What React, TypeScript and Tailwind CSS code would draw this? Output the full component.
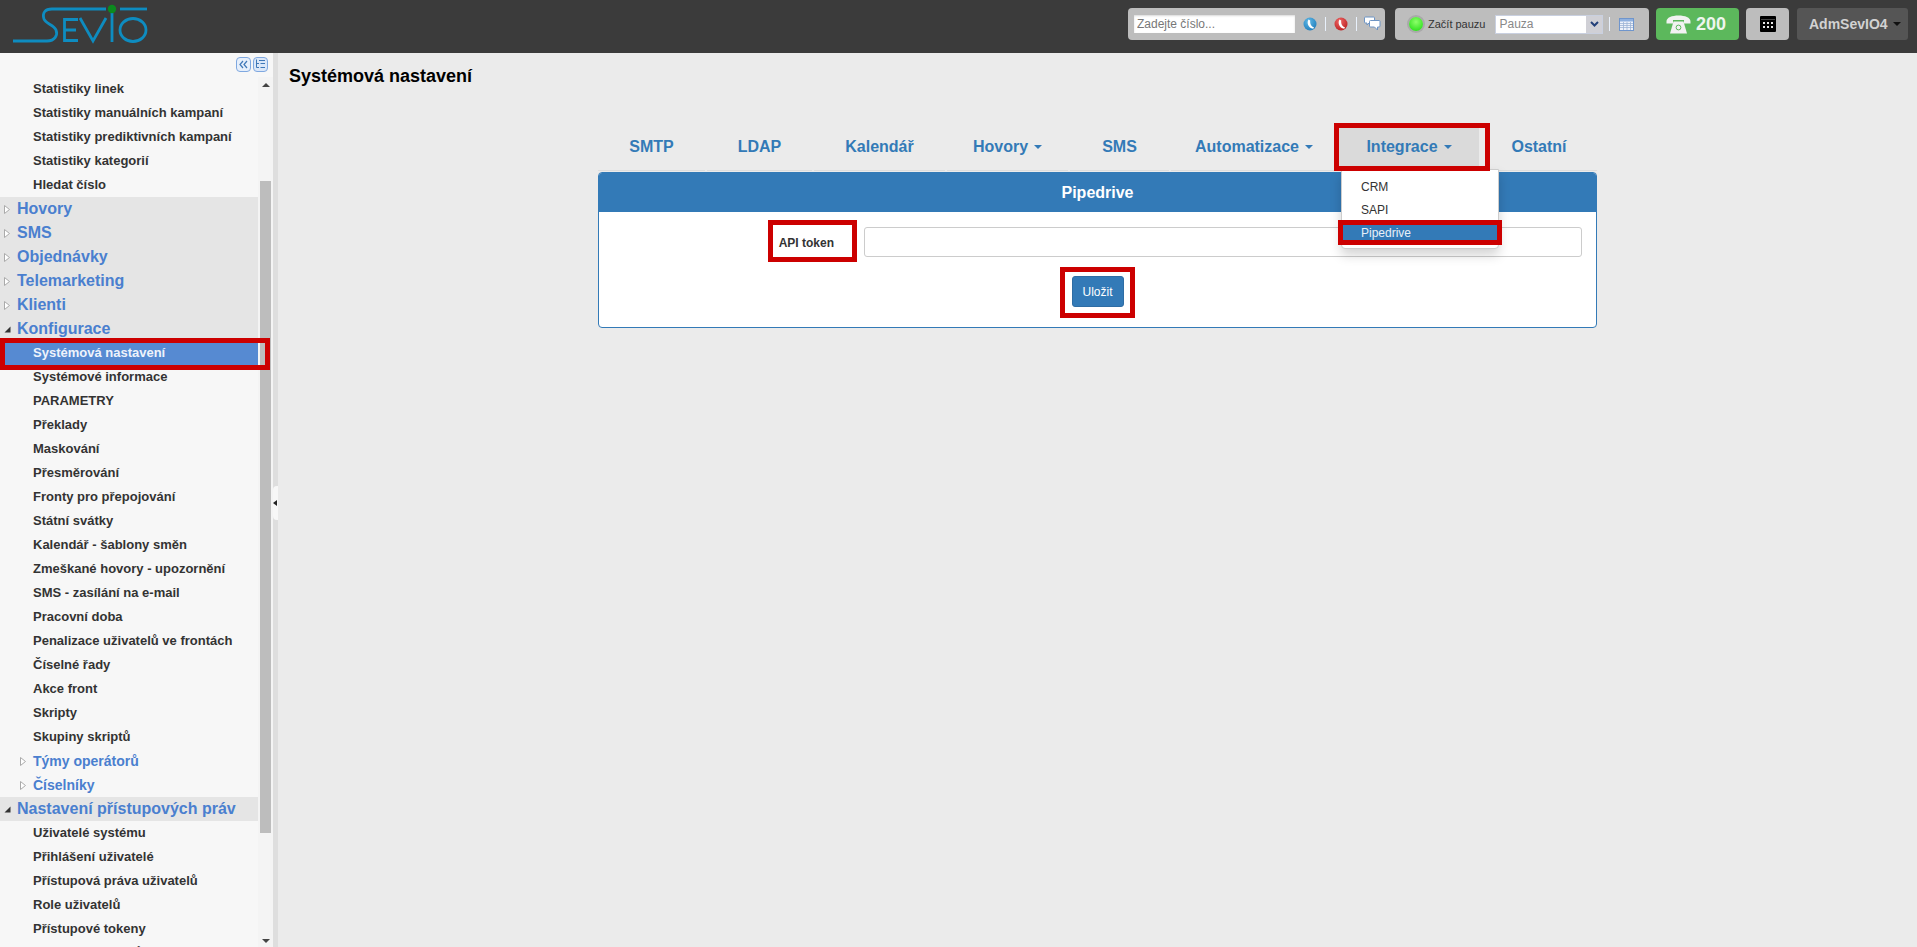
import React from 'react';

type TreeRow = {
  label: string;
  kind: 'item' | 'group' | 'subgroup';
  open?: boolean;
  active?: boolean;
};

const treeRows: TreeRow[] = [
  { label: 'Statistiky linek', kind: 'item' },
  { label: 'Statistiky manuálních kampaní', kind: 'item' },
  { label: 'Statistiky prediktivních kampaní', kind: 'item' },
  { label: 'Statistiky kategorií', kind: 'item' },
  { label: 'Hledat číslo', kind: 'item' },
  { label: 'Hovory', kind: 'group' },
  { label: 'SMS', kind: 'group' },
  { label: 'Objednávky', kind: 'group' },
  { label: 'Telemarketing', kind: 'group' },
  { label: 'Klienti', kind: 'group' },
  { label: 'Konfigurace', kind: 'group', open: true },
  { label: 'Systémová nastavení', kind: 'item', active: true },
  { label: 'Systémové informace', kind: 'item' },
  { label: 'PARAMETRY', kind: 'item' },
  { label: 'Překlady', kind: 'item' },
  { label: 'Maskování', kind: 'item' },
  { label: 'Přesměrování', kind: 'item' },
  { label: 'Fronty pro přepojování', kind: 'item' },
  { label: 'Státní svátky', kind: 'item' },
  { label: 'Kalendář - šablony směn', kind: 'item' },
  { label: 'Zmeškané hovory - upozornění', kind: 'item' },
  { label: 'SMS - zasílání na e-mail', kind: 'item' },
  { label: 'Pracovní doba', kind: 'item' },
  { label: 'Penalizace uživatelů ve frontách', kind: 'item' },
  { label: 'Číselné řady', kind: 'item' },
  { label: 'Akce front', kind: 'item' },
  { label: 'Skripty', kind: 'item' },
  { label: 'Skupiny skriptů', kind: 'item' },
  { label: 'Týmy operátorů', kind: 'subgroup' },
  { label: 'Číselníky', kind: 'subgroup' },
  { label: 'Nastavení přístupových práv', kind: 'group', open: true },
  { label: 'Uživatelé systému', kind: 'item' },
  { label: 'Přihlášení uživatelé', kind: 'item' },
  { label: 'Přístupová práva uživatelů', kind: 'item' },
  { label: 'Role uživatelů', kind: 'item' },
  { label: 'Přístupové tokeny', kind: 'item' },
  { label: 'Skupiny uživatelů', kind: 'item' },
];

const tabs = [
  { label: 'SMTP', width: 'w-[107px]' },
  { label: 'LDAP', width: 'w-[105px]' },
  { label: 'Kalendář', width: 'w-[131px]' },
  { label: 'Hovory', width: 'w-[121px]', caret: true },
  { label: 'SMS', width: 'w-[99px]' },
  { label: 'Automatizace', width: 'w-[166px]', caret: true },
  { label: 'Integrace', width: 'w-[140px]', caret: true, active: true },
  { label: 'Ostatní', width: 'w-[116px]' },
];

function Logo() {
  return (
    <svg width="160" height="53" viewBox="0 0 160 53" fill="none" stroke="#0e8cc0" strokeWidth="2.8">
      <path d="M13 41H47C55 41 58 35 56 30C54 25 46 24 44 19C42 13 45 9 52 9H106" />
      <path d="M78 19.5H64.5V40.5H78M64.5 30H76" />
      <path d="M80 18L93 41L106 18" />
      <path d="M112 13V42" />
      <path d="M120 9H147" />
      <ellipse cx="133" cy="30" rx="13" ry="11.5" />
      <circle cx="112" cy="9" r="4.2" fill="#0c8a1e" stroke="none" />
    </svg>
  );
}

function RoundPhone({ id, light, dark }: { id: string; light: string; dark: string }) {
  return (
    <svg width="14" height="14" viewBox="0 0 14 14">
      <defs>
        <radialGradient id={id} cx="0.4" cy="0.3" r="0.8">
          <stop offset="0" stopColor={light} />
          <stop offset="1" stopColor={dark} />
        </radialGradient>
      </defs>
      <circle cx="7" cy="7" r="6.5" fill={`url(#${id})`} />
      <path d="M5.4 2.4C3.6 6 5 10.6 10.2 11.8L11 10.2C8.4 9.6 6.8 7 7.2 3.4Z" fill="#fff" />
    </svg>
  );
}

function ChatIcon() {
  return (
    <svg width="17" height="16" viewBox="0 0 17 16" fill="#fff" stroke="#6d94c4" strokeWidth="1">
      <path d="M1.5 1H9.5Q10.5 1 10.5 2V6Q10.5 7 9.5 7H5L3 9V7H1.5Q0.5 7 0.5 6V2Q0.5 1 1.5 1Z" />
      <path d="M6.5 4.5H15Q16 4.5 16 5.5V10Q16 11 15 11H13.5V14L10.5 11H6.5Q5.5 11 5.5 10V5.5Q5.5 4.5 6.5 4.5Z" />
    </svg>
  );
}

function CalendarIcon() {
  return (
    <svg width="15" height="13" viewBox="0 0 15 13">
      <rect x="0.5" y="0.5" width="14" height="12" fill="#eef2fa" stroke="#6f95cc" />
      <rect x="1" y="1" width="13" height="2.5" fill="#8fb0de" />
      <path d="M1 5.5H14M1 7.5H14M1 9.5H14M4.5 4V12M8 4V12M11.5 4V12" stroke="#9db4d6" strokeWidth="0.8" />
    </svg>
  );
}

function DeskPhone() {
  return (
    <svg width="25" height="19" viewBox="0 0 25 19" fill="#f2f2f2">
      <path d="M0.5 6.5C0.5 2.5 6 0.5 12.5 0.5C19 0.5 24.5 2.5 24.5 6.5V8.5H18V5H7V8.5H0.5Z" />
      <path d="M7.5 6.5H17.5L21 18.5H4Z" />
      <circle cx="12.5" cy="12.5" r="2.4" fill="none" stroke="#5cb85c" strokeWidth="1" />
    </svg>
  );
}

function CalcIcon() {
  return (
    <svg width="16" height="16" viewBox="0 0 16 16">
      <rect width="16" height="16" rx="1" fill="#000" />
      <rect x="1" y="3" width="14" height="1" fill="#444" />
      <path d="M3 6H5V8H3ZM7 6H9V8H7ZM11 6H13V8H11ZM3 10H5V12H3ZM7 10H9V12H7ZM11 10H13V12H11Z" fill="#e8e8e8" />
    </svg>
  );
}

function Caret({ className }: { className: string }) {
  return <span className={`inline-block w-0 h-0 border-x-[4px] border-x-transparent border-t-[4px] ${className}`} />;
}

function TreeArrow({ open }: { open?: boolean }) {
  if (open) {
    return (
      <svg width="7" height="7" viewBox="0 0 7 7">
        <path d="M6.5 0.5V6.5H0.5Z" fill="#333" />
      </svg>
    );
  }
  return (
    <svg width="6" height="9" viewBox="0 0 6 9">
      <path d="M0.5 0.5L5.5 4.5L0.5 8.5Z" fill="#fff" stroke="#aaa" />
    </svg>
  );
}

// red annotation frame drawn over the screenshot
function RedBox({ className }: { className: string }) {
  return <div className={`absolute border-[5px] border-[#cc0000] pointer-events-none z-20 ${className}`} />;
}

function SidebarRow({ row }: { row: TreeRow }) {
  if (row.kind === 'group') {
    return (
      <div className="h-6 flex items-center bg-[#e5e5e5]">
        <div className="w-[17px] pl-1 flex items-center">
          <TreeArrow open={row.open} />
        </div>
        <span className="text-base font-bold text-[#4a7fcf] whitespace-nowrap">{row.label}</span>
      </div>
    );
  }
  if (row.kind === 'subgroup') {
    return (
      <div className="h-6 flex items-center">
        <div className="w-[33px] pl-5 flex items-center">
          <TreeArrow />
        </div>
        <span className="text-sm font-bold text-[#4a7fcf] whitespace-nowrap">{row.label}</span>
      </div>
    );
  }
  return (
    <div className={`relative h-6 flex items-center pl-[33px] ${row.active ? 'bg-[#568ad2]' : ''}`}>
      <span className={`text-[13px] font-bold whitespace-nowrap ${row.active ? 'text-[#eef3fb]' : 'text-[#333]'}`}>
        {row.label}
      </span>
      {row.active && <RedBox className="left-0 -top-[3px] w-[270px] h-[32px]" />}
    </div>
  );
}

function Sidebar() {
  return (
    <aside className="w-[273px] flex flex-col bg-[#f7f7f7] min-h-0">
      <div className="h-6 shrink-0 flex justify-end items-start gap-[2px] pt-1 pr-[5px]">
        <div className="w-[15px] h-[15px] rounded-[4px] border border-[#7fa8e0] bg-[#e6effb] flex items-center justify-center">
          <svg width="9" height="9" viewBox="0 0 9 9" fill="none" stroke="#3f78b8" strokeWidth="1.2">
            <path d="M4 1L1 4.5L4 8M8 1L5 4.5L8 8" />
          </svg>
        </div>
        <div className="w-[15px] h-[15px] rounded-[4px] border border-[#7fa8e0] bg-[#dbe7f8] flex items-center justify-center">
          <svg width="11" height="11" viewBox="0 0 11 11" fill="none" stroke="#3f78b8" strokeWidth="1">
            <path d="M1.5 0.5V8.5H4M1.5 4.5H4M4 1.5H10M5.5 4.5H10M5.5 8.5H10" />
          </svg>
        </div>
      </div>
      <div className="flex-1 flex min-h-0 overflow-hidden">
        <div className="w-[258px] shrink-0">
          {treeRows.map((row) => (
            <SidebarRow key={row.label} row={row} />
          ))}
        </div>
        <div className="w-[15px] flex flex-col items-center bg-[#f4f4f4]">
          <Caret className="mt-[6px] rotate-180 border-t-[#444]" />
          <div className="w-[11px] h-[652px] mt-[94px] bg-[#bdbdbd]" />
          <Caret className="mt-auto mb-1 border-t-[#444]" />
        </div>
      </div>
    </aside>
  );
}

function Splitter() {
  return (
    <div className="w-[5px] shrink-0 bg-[#dedede] flex items-center justify-center">
      <div className="w-[5px] h-[34px] mt-[6px] bg-[#f7f7f7] rounded-l-sm flex items-center">
        <span className="w-0 h-0 border-y-[3px] border-y-transparent border-r-[4px] border-r-[#222]" />
      </div>
    </div>
  );
}

function Tabs() {
  return (
    <div className="flex gap-[2px] mt-10">
      {tabs.map((tab) => (
        <div key={tab.label} className={`relative h-[45px] shrink-0 border-b border-[#dddddd] ${tab.width}`}>
          <div className={`h-[41px] flex items-center justify-center gap-[6px] ${tab.active ? 'bg-[#dadada]' : ''}`}>
            <span className="text-base font-bold text-[#337ab7]">{tab.label}</span>
            {tab.caret && <Caret className="border-t-[#337ab7]" />}
          </div>
          {tab.active && (
            <>
              <RedBox className="-left-[5px] -top-[3px] w-[156px] h-[48px]" />
              <div className="absolute left-[2px] top-[43px] w-[158px] h-[80px] bg-white border border-[#cccccc] rounded-b-[4px] shadow-[0_6px_12px_rgba(0,0,0,0.175)] z-10 py-[5px]">
                <div className="h-[23px] flex items-center pl-[19px] text-xs text-[#333]">CRM</div>
                <div className="h-[23px] flex items-center pl-[19px] text-xs text-[#333]">SAPI</div>
                <div className="relative h-[23px] flex items-center pl-[19px] text-xs text-[#e8f0f8] bg-[#337ab7]">
                  Pipedrive
                  <RedBox className="-left-[4px] -top-[1px] w-[164px] h-[25px]" />
                </div>
              </div>
            </>
          )}
        </div>
      ))}
    </div>
  );
}

function SettingsPanel() {
  return (
    <section className="mt-[1px] h-[156px] border border-[#337ab7] rounded-[4px] bg-white">
      <div className="h-[39px] bg-[#337ab7] rounded-t-[3px] flex items-center justify-center text-base font-bold text-white">
        Pipedrive
      </div>
      <div className="flex items-center h-[30px] mt-[15px]">
        <div className="relative w-[265px] shrink-0 text-right pr-[30px]">
          <span className="text-xs font-bold text-[#333]">API token</span>
          <RedBox className="left-[169px] -top-[10px] w-[89px] h-[42px]" />
        </div>
        <input className="w-[718px] h-[30px] border border-[#cccccc] rounded-[3px] bg-white" />
      </div>
      <div className="flex justify-center mt-[19px]">
        <div className="relative">
          <button className="h-[31px] w-[52px] bg-[#337ab7] border border-[#2e6da4] rounded-[3px] text-xs text-white">
            Uložit
          </button>
          <RedBox className="-left-[12px] -top-[9px] w-[75px] h-[51px]" />
        </div>
      </div>
    </section>
  );
}

export default function App() {
  return (
    <div className="h-screen w-full overflow-hidden flex flex-col bg-[#ebebeb] font-['Liberation_Sans',Arial,sans-serif]">
      <header className="h-[53px] shrink-0 bg-[#3b3b3b] flex items-start justify-between pr-[9px]">
        <Logo />
        <div className="flex items-center pt-2">
          <div className="w-[257px] h-8 bg-[#bdbdbd] rounded-[4px] flex items-center pl-[6px]">
            <input
              readOnly
              placeholder="Zadejte číslo..."
              className="w-[161px] h-[18px] bg-white px-[3px] text-xs text-[#555] placeholder:text-[#777] shadow-[inset_0_1px_2px_rgba(0,0,0,0.15)] outline-none"
            />
            <div className="ml-2">
              <RoundPhone id="callBlue" light="#5fb8e6" dark="#1d79b8" />
            </div>
            <div className="w-px h-[14px] bg-[#e8f0fb] ml-2" />
            <div className="ml-2">
              <RoundPhone id="callRed" light="#ee6666" dark="#b71c1c" />
            </div>
            <div className="w-px h-[14px] bg-[#e8f0fb] ml-2" />
            <div className="ml-[7px]">
              <ChatIcon />
            </div>
          </div>
          <div className="ml-[10px] w-[254px] h-8 bg-[#bdbdbd] rounded-[4px] flex items-center pl-[14px]">
            <span className="w-[14px] h-[14px] rounded-full bg-[radial-gradient(circle_at_50%_35%,#8dff6a,#19d80c)] ring-2 ring-[#a9a9a9]" />
            <span className="ml-[5px] text-[11px] text-[#333]">Začít pauzu</span>
            <div className="ml-[10px] w-[108px] h-[19px] bg-white border border-[#c9d0e0] flex items-center text-xs text-[#888]">
              <span className="flex-1 pl-[3px]">Pauza</span>
              <span className="w-4 h-[17px] bg-[#d0d0d6] flex items-center justify-center">
                <svg width="9" height="6" viewBox="0 0 9 6" fill="none" stroke="#23407a" strokeWidth="2">
                  <path d="M1 1L4.5 4.5L8 1" />
                </svg>
              </span>
            </div>
            <div className="w-px h-[14px] bg-[#e8f0fb] ml-[6px]" />
            <div className="ml-[9px]">
              <CalendarIcon />
            </div>
          </div>
          <div className="ml-[7px] w-[83px] h-8 bg-[#5cb85c] rounded-[4px] flex items-center pl-[10px]">
            <DeskPhone />
            <span className="ml-[5px] text-lg font-bold text-[#eef5ee]">200</span>
          </div>
          <div className="ml-[7px] w-[43px] h-8 bg-[#bdbdbd] rounded-[4px] flex items-center justify-center">
            <CalcIcon />
          </div>
          <div className="ml-2 w-[111px] h-8 bg-[#555555] rounded-[3px] flex items-center pl-3">
            <span className="text-sm font-bold text-[#d2d2d2]">AdmSevIO4</span>
            <Caret className="ml-[5px] border-t-[#111]" />
          </div>
        </div>
      </header>
      <div className="flex-1 flex min-h-0">
        <Sidebar />
        <Splitter />
        <main className="flex-1 min-w-0">
          <h1 className="pl-[11px] pt-[13px] text-lg leading-5 font-bold text-black">Systémová nastavení</h1>
          <div className="w-[999px] mx-auto">
            <Tabs />
            <SettingsPanel />
          </div>
        </main>
      </div>
    </div>
  );
}
